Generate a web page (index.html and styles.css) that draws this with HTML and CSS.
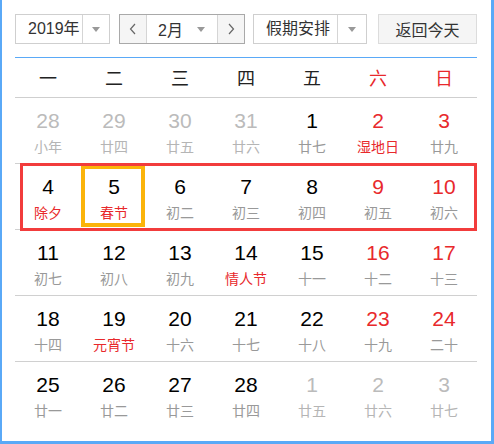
FILE: index.html
```html
<!DOCTYPE html>
<html lang="zh-CN">
<head>
<meta charset="utf-8">
<title>日历</title>
<link rel="stylesheet" href="styles.css">
</head>
<body>
<div class="cal">
  <div class="bar">
    <div class="sel sel-year">
      <span class="sel-label">2019年</span>
      <span class="sel-arrow"><i class="tri"></i></span>
    </div>
    <div class="sel sel-month">
      <span class="nav-btn"><svg width="8" height="12" viewBox="0 0 8 12"><polyline points="6,1 1.5,6 6,11" fill="none" stroke="#666" stroke-width="1.2"/></svg></span>
      <span class="month-mid"><span>2月</span><i class="tri"></i></span>
      <span class="nav-btn"><svg width="8" height="12" viewBox="0 0 8 12"><polyline points="2,1 6.5,6 2,11" fill="none" stroke="#666" stroke-width="1.2"/></svg></span>
    </div>
    <div class="sel sel-holiday">
      <span class="sel-label">假期安排</span>
      <span class="sel-arrow"><i class="tri"></i></span>
    </div>
    <div class="today-btn">返回今天</div>
  </div>

  <div class="grid">
    <div class="week-head">
      <span>一</span><span>二</span><span>三</span><span>四</span><span>五</span><span class="red">六</span><span class="red">日</span>
    </div>

    <div class="week">
      <div class="day other"><b>28</b><em>小年</em></div>
      <div class="day other"><b>29</b><em>廿四</em></div>
      <div class="day other"><b>30</b><em>廿五</em></div>
      <div class="day other"><b>31</b><em>廿六</em></div>
      <div class="day"><b>1</b><em>廿七</em></div>
      <div class="day"><b class="red">2</b><em class="red">湿地日</em></div>
      <div class="day"><b class="red">3</b><em>廿九</em></div>
    </div>

    <div class="week week-hl">
      <div class="day"><b>4</b><em class="red">除夕</em></div>
      <div class="day today"><b>5</b><em class="red">春节</em></div>
      <div class="day"><b>6</b><em>初二</em></div>
      <div class="day"><b>7</b><em>初三</em></div>
      <div class="day"><b>8</b><em>初四</em></div>
      <div class="day"><b class="red">9</b><em>初五</em></div>
      <div class="day"><b class="red">10</b><em>初六</em></div>
    </div>

    <div class="week">
      <div class="day"><b>11</b><em>初七</em></div>
      <div class="day"><b>12</b><em>初八</em></div>
      <div class="day"><b>13</b><em>初九</em></div>
      <div class="day"><b>14</b><em class="red">情人节</em></div>
      <div class="day"><b>15</b><em>十一</em></div>
      <div class="day"><b class="red">16</b><em>十二</em></div>
      <div class="day"><b class="red">17</b><em>十三</em></div>
    </div>

    <div class="week">
      <div class="day"><b>18</b><em>十四</em></div>
      <div class="day"><b>19</b><em class="red">元宵节</em></div>
      <div class="day"><b>20</b><em>十六</em></div>
      <div class="day"><b>21</b><em>十七</em></div>
      <div class="day"><b>22</b><em>十八</em></div>
      <div class="day"><b class="red">23</b><em>十九</em></div>
      <div class="day"><b class="red">24</b><em>二十</em></div>
    </div>

    <div class="week last">
      <div class="day"><b>25</b><em>廿一</em></div>
      <div class="day"><b>26</b><em>廿二</em></div>
      <div class="day"><b>27</b><em>廿三</em></div>
      <div class="day"><b>28</b><em>廿四</em></div>
      <div class="day other"><b>1</b><em>廿五</em></div>
      <div class="day other"><b>2</b><em>廿六</em></div>
      <div class="day other"><b>3</b><em>廿七</em></div>
    </div>
  </div>
</div>
</body>
</html>
```

FILE: styles.css
```css
html, body {
  margin: 0;
  padding: 0;
  background: #fff;
}

.cal {
  box-sizing: border-box;
  width: 494px;
  height: 444px;
  border-left: 2px solid #5aa9f7;
  border-right: 3px solid #5aa9f7;
  border-bottom: 3px solid #5aa9f7;
  padding: 14px 14px 0 13px;
  font-family: "Liberation Sans", "Noto Sans CJK SC", sans-serif;
  color: #000;
}

/* top bar */
.bar {
  display: flex;
  height: 30px;
  font-size: 16px;
  color: #333;
}

.sel {
  box-sizing: border-box;
  height: 30px;
  display: flex;
  border: 1px solid #cfcfcf;
  background: #fff;
}

.sel-year { width: 95px; }
.sel-month { width: 126px; margin-left: 9px; border-color: #a9a9a9; }
.sel-holiday { width: 114px; margin-left: 8px; }

.sel-label {
  display: flex;
  align-items: center;
  line-height: 28px;
}

.sel-year .sel-label { width: 66px; padding-left: 12px; box-sizing: border-box; }
.sel-holiday .sel-label { width: 83px; padding-left: 12px; box-sizing: border-box; }

.sel-arrow {
  flex: 1;
  display: flex;
  align-items: center;
  justify-content: center;
  border-left: 1px solid #d5d5d5;
}

.tri {
  display: block;
  width: 0;
  height: 0;
  border-left: 4.5px solid transparent;
  border-right: 4.5px solid transparent;
  border-top: 5px solid #999;
}

.nav-btn {
  width: 26px;
  display: flex;
  align-items: center;
  justify-content: center;
  background: #f5f5f5;
}

.month-mid {
  box-sizing: border-box;
  width: 72px;
  display: flex;
  align-items: center;
  padding-left: 11px;
  padding-right: 12px;
  border-left: 1px solid #d5d5d5;
  border-right: 1px solid #d5d5d5;
}

.month-mid .tri { margin-left: auto; }

.today-btn {
  box-sizing: border-box;
  width: 99px;
  height: 30px;
  margin-left: 11px;
  border: 1px solid #dcdcdc;
  background: #f5f5f5;
  display: flex;
  align-items: center;
  justify-content: center;
}

/* grid */
.grid {
  margin-top: 13px;
  border-top: 1px solid #5aa9f7;
}

.week-head {
  display: grid;
  grid-template-columns: repeat(7, 66px);
  height: 39px;
  border-bottom: 1px solid #cfcfcf;
  font-size: 18px;
  line-height: 39px;
  text-align: center;
  color: #222;
  font-family: "Noto Sans CJK SC", sans-serif;
}

.week {
  position: relative;
  display: grid;
  grid-template-columns: repeat(7, 66px);
  height: 65px;
  border-bottom: 1px solid #d0d0d0;
}

.week.last { border-bottom: none; }

.week-hl::after {
  content: "";
  position: absolute;
  box-sizing: border-box;
  top: -1px;
  left: 5px;
  right: 0;
  height: 68px;
  border: 3px solid #f23c3c;
  pointer-events: none;
}

.day {
  position: relative;
  display: flex;
  flex-direction: column;
  align-items: center;
  padding-top: 11px;
}

.day b {
  font-weight: normal;
  font-size: 21px;
  line-height: 24px;
  color: #000;
}

.day em {
  font-style: normal;
  font-size: 14px;
  line-height: 20px;
  margin-top: 3px;
  color: #999;
  font-family: "Noto Sans CJK SC", sans-serif;
}

.day.other b { color: #bbb; }
.day.other em { color: #b5b5b5; }

.red { color: #e8292c !important; }

.today::before {
  content: "";
  position: absolute;
  box-sizing: border-box;
  top: 1px;
  left: 0;
  width: 64px;
  height: 62px;
  border: 4px solid #fbb40a;
}
```
